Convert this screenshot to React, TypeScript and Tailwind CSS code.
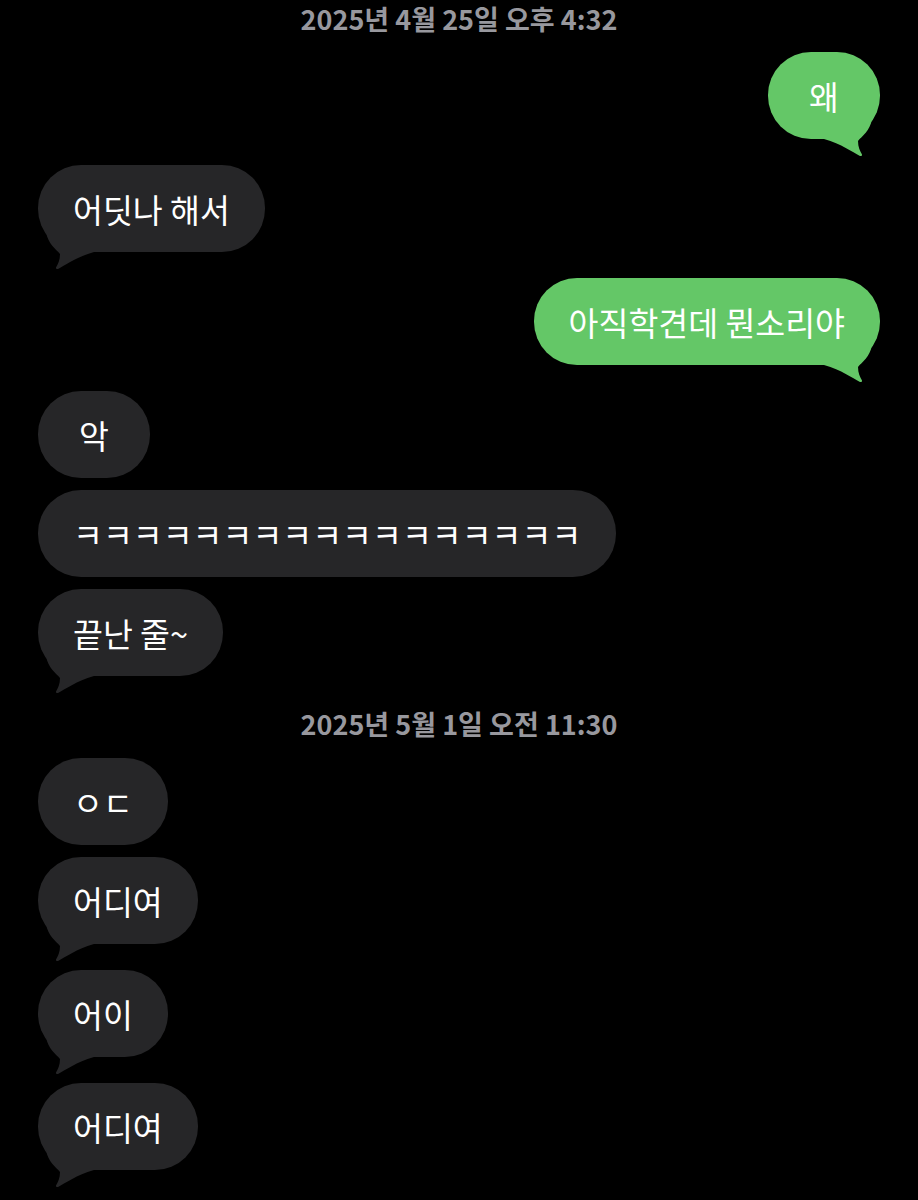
import React from "react";

const GRAY = "#262628";
const GREEN = "#64c767";

function Tail({ side, color }: { side: "left" | "right"; color: string }) {
  return (
    <svg
      className={side === "left" ? "absolute left-0 bottom-[-20px]" : "absolute right-0 bottom-[-20px]"}
      width="60"
      height="50"
      viewBox="0 0 60 50"
      aria-hidden
    >
      <g transform={side === "right" ? "translate(60,0) scale(-1,1)" : undefined}>
        <path
          d="M8 10 C10 22 18 27 22 32 C22 38 20 42 18 45.5 Q17.5 47.5 20 47 C28 43 38 35 56 30 L56 10 Z"
          fill={color}
        />
      </g>
    </svg>
  );
}

function Bubble({ text, sent, tail }: { text: string; sent?: boolean; tail?: boolean }) {
  return (
    <div className={`flex ${sent ? "justify-end" : "justify-start"} ${tail ? "mb-[26px]" : "mb-[12px]"}`}>
      <div
        className={`relative flex h-[87px] min-w-[112px] items-center justify-center rounded-[43px] px-[35px] text-[32.5px] leading-[40px] text-white ${
          sent ? "bg-[#64c767]" : "bg-[#262628]"
        }`}
      >
        {tail && <Tail side={sent ? "right" : "left"} color={sent ? GREEN : GRAY} />}
        <span className="relative whitespace-nowrap">{text}</span>
      </div>
    </div>
  );
}

function Stamp({ text, className }: { text: string; className: string }) {
  return (
    <div className={`text-center text-[27px] font-semibold leading-[32px] text-[#98989e] ${className}`}>{text}</div>
  );
}

export default function App() {
  return (
    <div className="flex min-h-[1200px] w-full flex-col overflow-hidden bg-black px-[38px] pt-[3px] font-['Noto_Sans_CJK_KR',sans-serif]">
      <Stamp text="2025년 4월 25일 오후 4:32" className="mb-[17px]" />
      <Bubble text="왜" sent tail />
      <Bubble text="어딧나 해서" tail />
      <Bubble text="아직학견데 뭔소리야" sent tail />
      <Bubble text="악" />
      <Bubble text="ㅋㅋㅋㅋㅋㅋㅋㅋㅋㅋㅋㅋㅋㅋㅋㅋㅋ" />
      <Bubble text="끝난 줄~" tail />
      <Stamp text="2025년 5월 1일 오전 11:30" className="mt-[6px] mb-[18px]" />
      <Bubble text="ㅇㄷ" />
      <Bubble text="어디여" tail />
      <Bubble text="어이" tail />
      <Bubble text="어디여" tail />
    </div>
  );
}
